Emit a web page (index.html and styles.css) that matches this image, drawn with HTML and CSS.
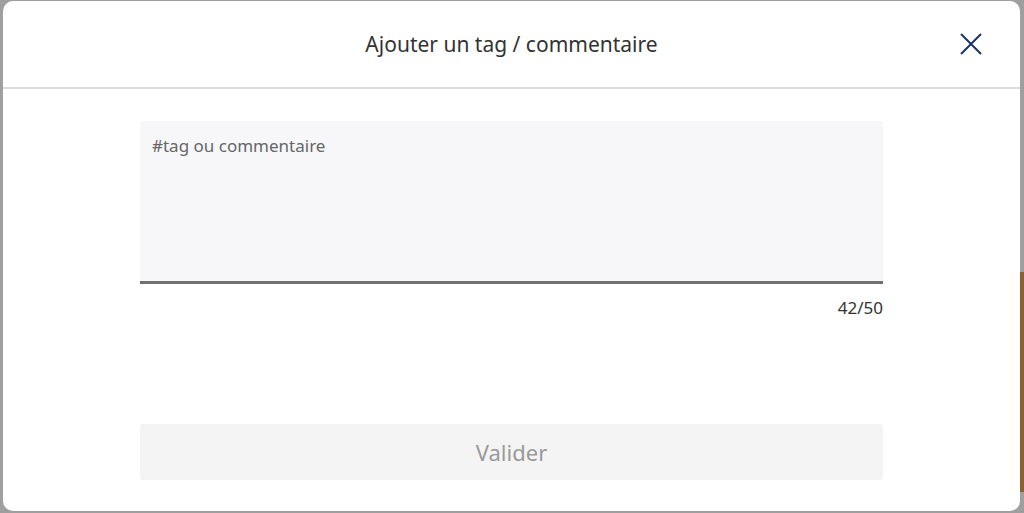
FILE: index.html
```html
<!DOCTYPE html>
<html lang="fr">
<head>
  <meta charset="UTF-8">
  <meta name="viewport" content="width=device-width, initial-scale=1.0">
  <title>Ajouter un tag</title>
  <link rel="stylesheet" href="styles.css">
</head>
<body>
  <div class="backdrop">
    <div class="page-hint right"></div>
    <div class="modal">
      <div class="modal-header">
        <h1>Ajouter un tag / commentaire</h1>
        <button class="close-button" type="button" aria-label="Fermer">
          <svg width="24" height="24" viewBox="0 0 24 24">
            <path d="M2 2 L22 22 M22 2 L2 22" stroke="#1c3366" stroke-width="2" fill="none"/>
          </svg>
        </button>
      </div>
      <form class="tag-form">
        <textarea class="tag-input" placeholder="#tag ou commentaire"></textarea>
        <div class="counter">42/50</div>
        <button class="submit-button" type="submit" disabled>Valider</button>
      </form>
    </div>
  </div>
</body>
</html>
```

FILE: styles.css
```css
body {
  font-family: "Noto Sans", "Open Sans", sans-serif;
  margin: 0;
  padding: 0;
}
.backdrop {
  position: relative;
  width: 1024px;
  height: 513px;
  background-color: #9f9f9f;
  padding: 1px 4px 2px 3px;
  box-sizing: border-box;
}
.page-hint.right {
  position: absolute;
  right: 0;
  top: 272px;
  width: 4px;
  height: 220px;
  background-color: #8a6236;
}
.modal {
  position: relative;
  height: 100%;
  background-color: #fff;
  border-radius: 10px;
  display: flex;
  flex-direction: column;
}
.modal-header {
  height: 86px;
  border-bottom: 2px solid #dcdcdc;
  display: flex;
  align-items: center;
  justify-content: center;
  position: relative;
}
.modal-header h1 {
  margin: 0;
  font-size: 21px;
  font-weight: normal;
  color: #333;
}
.close-button {
  position: absolute;
  right: 37px;
  top: 31px;
  background: none;
  border: none;
  padding: 0;
  cursor: pointer;
}
.tag-form {
  width: 743px;
  margin: 32px auto 0 137px;
  display: flex;
  flex-direction: column;
}
.tag-input {
  height: 163px;
  box-sizing: border-box;
  padding: 13px 12px;
  border: none;
  border-bottom: 3px solid #707070;
  border-radius: 3px 3px 0 0;
  background-color: #f7f7f9;
  font-family: inherit;
  font-size: 17px;
  resize: none;
}
.tag-input::placeholder {
  color: #666;
}
.counter {
  text-align: right;
  font-size: 17px;
  color: #333;
  margin-top: 12px;
}
.submit-button {
  margin-top: 105px;
  height: 56px;
  border: none;
  border-radius: 3px;
  background-color: #f4f4f4;
  color: #999;
  font-family: inherit;
  font-size: 22px;
}
```
